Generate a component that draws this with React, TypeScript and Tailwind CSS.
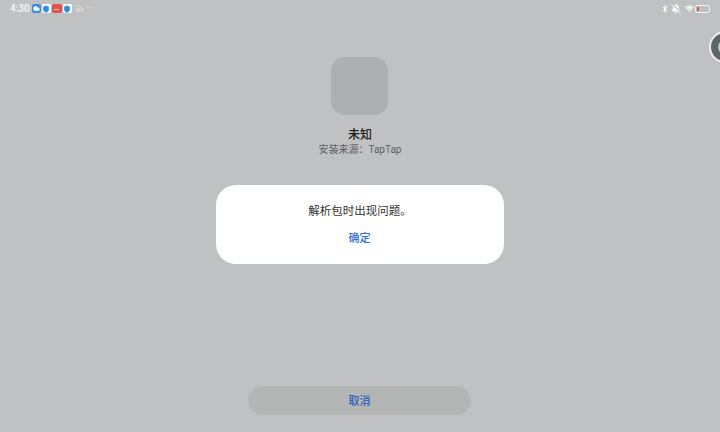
import { Bluetooth, BellOff, Wifi, Cloud, Shield, Rss } from "lucide-react";

const cjk = "font-['Roboto','Noto_Sans_CJK_SC',sans-serif]";

function StatusBar() {
  return (
    <div className="flex h-[17px] shrink-0 items-center justify-between pl-[10px] pr-[10px]">
      <div className="flex items-center gap-[1px]">
        <span className="mr-[1px] text-[10px] font-medium leading-none text-[#f4f5f6]">4:30</span>
        <span className="flex h-[9px] w-[9px] items-center justify-center rounded-[2px] bg-[#3f8ee0]">
          <Cloud className="h-[7px] w-[7px] fill-white text-white" />
        </span>
        <span className="flex h-[9px] w-[9px] items-center justify-center rounded-[2px] bg-white">
          <Shield className="h-[8px] w-[8px] fill-[#2b8fe0] text-[#2b8fe0]" />
        </span>
        <span className="flex h-[9px] w-[10px] items-center justify-center rounded-[2px] bg-[#e0514f]">
          <span className="mt-[1px] h-[1px] w-[5px] bg-[#f7c5c4]" />
        </span>
        <span className="flex h-[9px] w-[9px] items-center justify-center rounded-[2px] bg-white">
          <Shield className="h-[8px] w-[8px] fill-[#2b8fe0] text-[#2b8fe0]" />
        </span>
        <Rss className="ml-[2px] h-[9px] w-[9px] text-[#f0f1f2]" />
        <span className="ml-[2px] text-[9px] leading-none text-[#eeeff0]">···</span>
      </div>
      <div className="flex items-center">
        <Bluetooth className="h-[10px] w-[8px] text-white" strokeWidth={3} />
        <BellOff className="ml-[2px] h-[10px] w-[10px] fill-white text-white" />
        <Wifi className="ml-[4px] h-[9px] w-[9px] text-white" strokeWidth={3} />
        <span className="relative ml-[1px] flex h-[8px] w-[15px] items-center rounded-[2px] border border-[#f2f2f2] px-[1px]">
          <span className="h-[4px] w-[2px] bg-[#d9534f]" />
        </span>
      </div>
    </div>
  );
}

export default function App() {
  return (
    <div className={`relative flex h-[432px] w-[720px] flex-col overflow-hidden bg-[#c0c1c3] ${cjk}`}>
      <StatusBar />

      {/* App info */}
      <div className="mt-[40px] flex flex-col items-center">
        <div className="mr-[1px] h-[58px] w-[57px] rounded-[14px] bg-[#aeafb1]" />
        <div className="mt-[12px] text-[12px] font-medium leading-[16px] text-[#1d1d1f]">未知</div>
        <div className="text-[10px] leading-[14px] text-[#5e5f61]">安装来源：TapTap</div>
      </div>

      {/* Dialog */}
      <div className="mt-[28px] flex justify-center">
        <div className="flex h-[79px] w-[288px] flex-col items-center rounded-[20px] bg-white pt-[18px]">
          <div className="text-[11.5px] leading-[16px] text-[#333333]">解析包时出现问题。</div>
          <div className="mr-[1px] mt-[12px] text-[11px] font-medium leading-[16px] text-[#2f6fd6]">确定</div>
        </div>
      </div>

      <div className="flex-1" />

      <div className="mb-[17px] mr-[1px] flex justify-center">
        <div className="flex h-[29px] w-[223px] items-center justify-center rounded-full bg-[#b4b5b5] pt-[3px] text-[11px] font-medium text-[#2f62bd]">
          取消
        </div>
      </div>

      {/* Floating ball */}
      <div className="absolute left-[709px] top-[31px] flex h-[32px] w-[32px] items-center justify-center rounded-full border-[2px] border-[#eceff0] bg-[#5d6468]">
        <div className="h-[14px] w-[14px] rounded-full bg-[#a9cfd0]" />
      </div>
    </div>
  );
}
